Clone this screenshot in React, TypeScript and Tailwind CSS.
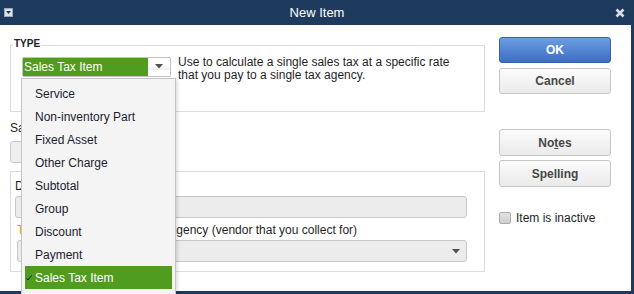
import React from 'react';

const itemTypes = [
  'Service',
  'Non-inventory Part',
  'Fixed Asset',
  'Other Charge',
  'Subtotal',
  'Group',
  'Discount',
  'Payment',
  'Sales Tax Item',
];

function Arrow() {
  return (
    <svg width="8" height="5" viewBox="0 0 8 5">
      <path d="M0 0 L8 0 L4 4.5 Z" fill="#505050" />
    </svg>
  );
}

function TitleBar() {
  return (
    <div className="flex h-[25px] shrink-0 items-center bg-[#1e3b5e]">
      <div className="flex w-[40px] pl-[4px]">
        <svg width="9" height="9" viewBox="0 0 9 9">
          <rect x="0.5" y="0.5" width="8" height="8" fill="#dde3ea" stroke="#9aa8ba" />
          <path d="M2 3 L7 3 L4.5 6 Z" fill="#1e3b5e" />
        </svg>
      </div>
      <div className="flex-1 text-center text-[13px] text-white">New Item</div>
      <div className="flex w-[40px] justify-end pr-[9px]">
        <svg width="10" height="10" viewBox="0 0 10 10">
          <path d="M1.5 1.5 L8.5 8.5 M8.5 1.5 L1.5 8.5" stroke="#d9dee5" strokeWidth="2.6" />
        </svg>
      </div>
    </div>
  );
}

function GrayButton({ children }: { children: React.ReactNode }) {
  return (
    <button
      type="button"
      className="h-[27px] w-[112px] rounded-[3px] border border-[#c6c6c6] bg-linear-to-b from-[#fcfcfc] to-[#eaeaea] text-[12px] font-bold text-[#474747]"
    >
      {children}
    </button>
  );
}

function TypeDropdown() {
  return (
    <div className="absolute left-[21px] top-[78px] h-[230px] w-[155px] border border-[#c4c4c4] bg-[#f4f4f4] px-[3px] pt-[3px] shadow-[2px_2px_3px_rgba(0,0,0,0.12)]">
      {itemTypes.map((t) => {
        const selected = t === 'Sales Tax Item';
        return (
          <div
            key={t}
            className={
              selected
                ? 'relative flex h-[23px] items-center bg-[#4f9c1e] pl-[10px] text-white'
                : 'flex h-[23px] items-center pl-[10px] text-[#1c1d30]'
            }
          >
            {selected && (
              <svg className="absolute left-[1px] top-[9px]" width="6" height="6" viewBox="0 0 6 6">
                <path d="M0.5 3.2 L2 5 L5.5 0.5" stroke="#14200c" strokeWidth="1" fill="none" />
              </svg>
            )}
            {t}
          </div>
        );
      })}
    </div>
  );
}

export default function App() {
  return (
    <div className="relative flex h-[294px] w-[634px] flex-col overflow-hidden bg-white font-['Liberation_Sans',Arial,sans-serif] text-[12px] text-[#1f1f1f]">
      <TitleBar />

      <div className="flex flex-1 border-b-[3px] border-r-[3px] border-[#1e3b5e]">
        {/* Left side */}
        <div className="w-[485px] shrink-0 pl-[10px] pt-[20px]">
          {/* TYPE group */}
          <div className="relative h-[67px] w-[475px] border border-[#dcdcdc]">
            <span className="absolute -top-[8px] left-[2px] bg-white px-[1px] text-[10px] font-bold leading-[12px] text-[#222]">
              TYPE
            </span>
            <div className="flex items-start pl-[11px] pt-[10px]">
              <div className="mt-[1px] flex h-[20px] w-[149px] items-center rounded-[2px] border border-[#c2c2c2] bg-white">
                <div className="flex h-[18px] w-[125px] items-center bg-[#4f9c1e] pl-[1px] text-[12px] text-white">
                  Sales Tax Item
                </div>
                <div className="flex flex-1 items-center justify-center bg-linear-to-b from-white to-[#f0f0f0] pb-[1px]">
                  <Arrow />
                </div>
              </div>
              <p className="ml-[7px] leading-[13px] text-[#1f1f1f]">
                Use to calculate a single sales tax at a specific rate
                <br />
                that you pay to a single tax agency.
              </p>
            </div>
          </div>

          {/* Sales Tax Name */}
          <div className="mt-[9px] leading-[14px]">Sales Tax Name</div>
          <div className="mt-[6px] h-[22px] w-[160px] rounded-[3px] border border-[#c8c8c8] bg-[#efefef]" />

          {/* Details group */}
          <div className="mt-[8px] h-[101px] w-[475px] border border-[#dcdcdc] pl-[4px] pt-[7px]">
            <div className="leading-[14px]">Description</div>
            <div className="mt-[3px] h-[22px] w-[452px] rounded-[3px] border border-[#c8c8c8] bg-[#ececec]" />
            <div className="mt-[5px] flex">
              <div className="w-[132px] pl-[2px]">
                <div className="leading-[14px] text-[#e79a2a]">Tax Rate (%)</div>
                <div className="mt-[3px] h-[22px] w-[70px] rounded-[3px] border border-[#c8c8c8] bg-[#ececec]" />
              </div>
              <div className="w-[320px]">
                <div className="leading-[14px]">Tax Agency (vendor that you collect for)</div>
                <div className="mt-[3px] flex h-[22px] w-[320px] items-center justify-end rounded-[3px] border border-[#c8c8c8] bg-[#ececec] pr-[6px]">
                  <Arrow />
                </div>
              </div>
            </div>
          </div>
        </div>

        {/* Right side */}
        <div className="ml-[14px] flex w-[112px] flex-col pt-[12px]">
          <button
            type="button"
            className="h-[26px] w-[112px] rounded-[3px] border border-[#3462ad] bg-linear-to-b from-[#6d9de3] to-[#3e6dc3] text-[12px] font-bold text-white"
          >
            OK
          </button>
          <button
            type="button"
            className="mt-[5px] h-[26px] w-[112px] rounded-[3px] border border-[#c6c6c6] bg-linear-to-b from-[#fcfcfc] to-[#eaeaea] text-[12px] font-bold text-[#474747]"
          >
            Cancel
          </button>
          <div className="mt-[35px]">
            <GrayButton>
              No<span className="underline">t</span>es
            </GrayButton>
          </div>
          <div className="mt-[4px]">
            <GrayButton>
              Spellin<span className="underline">g</span>
            </GrayButton>
          </div>
          <div className="mt-[22px] flex items-center">
            <div className="h-[12px] w-[12px] rounded-[2px] border border-[#ababab] bg-linear-to-b from-[#e2e2e2] to-[#cfcfcf]" />
            <span className="ml-[5px] text-[#1f1f1f]">Item is inactive</span>
          </div>
        </div>
      </div>

      <TypeDropdown />
    </div>
  );
}
